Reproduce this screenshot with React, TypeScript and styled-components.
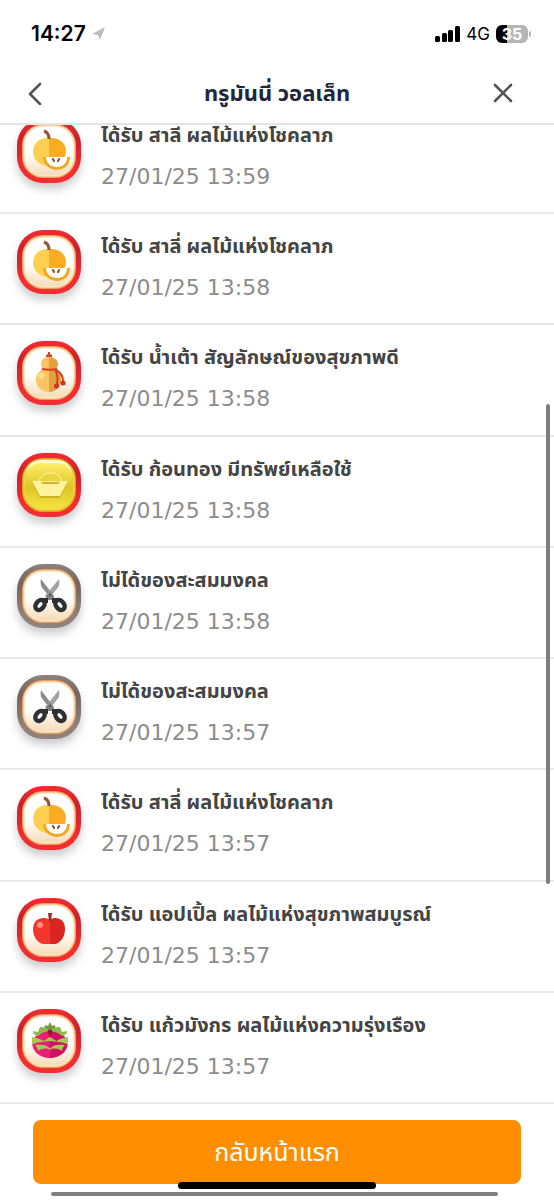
import React from "react";
import styled, { createGlobalStyle } from "styled-components";

const GlobalStyle = createGlobalStyle`
  * { box-sizing: border-box; }
  body { margin: 0; background: #fff; font-family: "Noto Sans Thai", "Noto Sans", "Open Sans", sans-serif; }
  h1, h2, p, ul { margin: 0; padding: 0; }
  button { border: 0; padding: 0; cursor: pointer; font-family: inherit; }
`;

const Page = styled.div`
  position: relative;
  display: flex;
  flex-direction: column;
  min-height: 100vh;
  overflow: hidden;
`;

const Top = styled.header`
  position: relative;
  z-index: 1;
  background: #fff;
  border-bottom: 2px solid #e4e4e4;
`;

const StatusBar = styled.div`
  display: flex;
  justify-content: space-between;
  align-items: center;
  height: 62px;
  padding: 5px 23px 0 31px;
  font-family: Inter, sans-serif;
  color: #000;
`;

const StatusGroup = styled.div`
  display: flex;
  align-items: center;
  gap: 6px;
`;

const Time = styled.time`
  font-size: 21px;
  font-weight: 600;
`;

const Network = styled.span`
  font-size: 17px;
`;

const Battery = styled.span`
  display: flex;
  align-items: center;
  gap: 1px;
`;

const BatteryBody = styled.span`
  width: 32px;
  border-radius: 6px;
  background: linear-gradient(90deg, #000 35%, #b5b5b5 35%);
  color: #fff;
  font-size: 16px;
  font-weight: 700;
  line-height: 18px;
  text-align: center;
`;

const BatteryTip = styled.span`
  width: 2px;
  height: 6px;
  border-radius: 0 2px 2px 0;
  background: #b5b5b5;
`;

const NavBar = styled.nav`
  display: grid;
  grid-template-columns: 1fr auto 1fr;
  align-items: center;
  height: 61px;
  padding: 0 24px;
`;

const NavButton = styled.button<{ $end?: boolean }>`
  display: flex;
  justify-self: ${(p) => (p.$end ? "end" : "start")};
  margin-right: ${(p) => (p.$end ? "15px" : "0")};
  background: none;
`;

const NavTitle = styled.h1`
  color: #22263a;
  font-size: 22px;
  font-weight: 700;
  line-height: 28px;
  padding-top: 4px;
`;

const History = styled.ul`
  flex: 1;
  display: grid;
  grid-auto-rows: 1fr;
  margin-top: -22px;
  list-style: none;
`;

const Row = styled.li`
  display: flex;
  gap: 20px;
  min-height: 111px;
  padding: 16px 18px 0 17px;
  border-bottom: 2px solid #e9e9e9;
`;

const BadgeArt = styled.svg`
  flex: none;
  overflow: visible;
  filter: drop-shadow(0 6px 4px rgba(60, 60, 70, 0.26));
`;

const RowText = styled.div`
  display: flex;
  flex-direction: column;
  gap: 10px;
  padding-top: 2px;
`;

const RowTitle = styled.h2`
  color: #444;
  font-size: 20px;
  font-weight: 700;
  line-height: 30px;
  white-space: nowrap;
`;

const RowDate = styled.time`
  color: #8c8c8c;
  font-family: "DejaVu Sans", sans-serif;
  font-size: 22px;
  line-height: 32px;
`;

const Footer = styled.footer`
  display: flex;
  flex-direction: column;
  padding: 16px 33px;
`;

const HomeButton = styled.button`
  height: 64px;
  padding-top: 2px;
  border-radius: 8px;
  background: #ff8f00;
  color: #fff;
  font-size: 25px;
`;

const ScrollThumb = styled.div`
  position: absolute;
  z-index: 2;
  top: 404px;
  right: 4px;
  width: 4px;
  height: 480px;
  border-radius: 2px;
  background: #7d7d7d;
`;

const HorizontalThumb = styled.div`
  position: absolute;
  right: 56px;
  bottom: 4px;
  left: 51px;
  height: 4px;
  border-radius: 2px;
  background: #808080;
`;

const HomeIndicator = styled.div`
  position: absolute;
  bottom: 11px;
  left: 50%;
  width: 198px;
  height: 7px;
  margin-left: -99px;
  border-radius: 4px;
  background: #000;
`;

type Kind = "pear" | "gourd" | "gold" | "scissors" | "apple" | "dragon";

const Pear = () => (
  <g>
    <path d="M32 19C22 18 16 25 16 33s7 14 16 14z" fill="#ffd04f" />
    <path d="M32 19c10-1 17 5 17 13s-7 15-17 15z" fill="#fbac22" />
    <path d="M27 12c3 1 5 4 5 8" stroke="#96543a" strokeWidth="3" fill="none" />
    <path d="M26 38h27c0 8-6 13-13 13s-14-5-14-13z" fill="#efa923" />
    <path d="M29 38h21c0 6-4 10-10 10s-11-4-11-10z" fill="#fff" />
    <path d="M36 40l1 2M42 40l-1 2" stroke="#8b4b2b" strokeWidth="2" strokeLinecap="round" />
  </g>
);

const Gourd = () => (
  <g>
    <path d="M32 16c-5 0-8 3-8 7 0 2 1 4 2 5-4 2-7 6-7 11 0 7 6 12 13 12z" fill="#fcc461" />
    <path d="M32 16c5 0 9 3 9 7 0 3-1 4-3 5 4 2 6 6 6 11 0 7-5 12-12 12z" fill="#dfa23e" />
    <path d="M29 16v-2l2-1v-2h2v2l2 1v2z" fill="#cf4a24" />
    <circle cx="24" cy="35" r="3" fill="#ffe08c" />
    <path d="M25 28c5 1 10 1 15 0M38 29c3 4 3 9 2 15M39 29c4 2 7 6 7 11" stroke="#dc3d1e" strokeWidth="2" fill="none" />
    <circle cx="39.5" cy="45" r="2.5" fill="#d62d1c" />
    <circle cx="46" cy="42" r="2.5" fill="#d62d1c" />
  </g>
);

const Gold = () => (
  <g>
    <path d="M22 29c1-12 22-12 23 0z" fill="#ecd63e" stroke="#fff7bb" strokeWidth="1" />
    <path d="M15 29h36l-8 16H23z" fill="#8f7a00" opacity="0.35" />
    <path d="M15 28h8l3 3h15l3-3h7l-8 15H23z" fill="#fff39b" />
  </g>
);

const Scissors = () => (
  <g>
    <path d="M24 15c-1 5 0 8 3 11l8 10 2-4z" fill="#8c8c8e" />
    <path d="M42 15c1 5 0 8-3 11l-8 10-3-4z" fill="#a3a3a5" />
    <path d="M33 27l4 6-2 3h-4l-2-3z" fill="#808083" />
    <ellipse cx="23" cy="41" rx="4" ry="5.5" transform="rotate(38 23 41)" fill="#fff" stroke="#2f3034" strokeWidth="4.5" />
    <ellipse cx="43" cy="41" rx="4" ry="5.5" transform="rotate(-38 43 41)" fill="#fff" stroke="#2f3034" strokeWidth="4.5" />
    <path d="M24 34h7v5h-3zM42 34h-7v5h3z" fill="#2f3034" />
    <circle cx="33" cy="31" r="1" fill="#4d4d50" />
  </g>
);

const Apple = () => (
  <g>
    <path d="M33 22c-6-4-17-2-17 9 0 8 5 15 11 15h6z" fill="#f2362b" />
    <path d="M33 22c5-4 15-2 15 9 0 8-5 15-11 15h-4z" fill="#d9241f" />
    <path d="M32 23l-1-8h4l-1 8z" fill="#9b2a26" />
    <circle cx="23" cy="27" r="3" fill="#ff8e80" />
  </g>
);

const Dragon = () => (
  <g>
    <path d="M33 19c-6 0-11 3-13 7l-5 5c-1 11 8 18 18 18z" fill="#ee1c76" />
    <path d="M33 19c6 0 11 3 13 7l5 5c1 11-8 18-18 18z" fill="#d10f63" />
    <path d="M27 21l1-5 3 1 2-4 2 4 3-1 1 5-4 1h-4z" fill="#6f9c3b" />
    <path d="M23 18c5 0 9 2 10 5-4-1-8 0-12 4-3-1-5-2-5-5l5 1zM43 18c-5 0-9 2-10 5 4-1 8 0 12 4 3-1 5-2 5-5l-5 1z" fill="#8fba48" />
    <path d="M15 28c7 1 10 3 13 5-5 0-9 0-13 3zM51 28c-7 1-10 3-13 5 5 0 9 0 13 3zM25 33l8-5 8 5-8-1z" fill="#a5ca50" />
    <path d="M18 36c7-1 13 0 15 4 2-4 8-5 15-4-2 2-3 4-3 6-5-3-9-3-12-1-3-2-7-2-12 1 0-2-1-4-3-6z" fill="#a5ca50" />
    <circle cx="33" cy="23" r="2.5" fill="#a0103f" />
    <path d="M33 23v5" stroke="#a0103f" strokeWidth="2" />
  </g>
);

const art: Record<Kind, () => React.ReactElement> = {
  pear: Pear, gourd: Gourd, gold: Gold, scissors: Scissors, apple: Apple, dragon: Dragon,
};

const Badge = ({ kind, id }: { kind: Kind; id: string }) => {
  const Art = art[kind];
  const rim = kind === "scissors" ? ["#74645f", "#8d827d"] : ["#cb202d", "#f52c30"];
  const face = kind === "gold" ? ["#fff26d", "#dfc526", "#f5e340"] : ["#fff", "#fff", "#f6dcb8"];
  return (
    <BadgeArt width="64" height="64" viewBox="0 0 64 64" aria-hidden="true">
      <defs>
        <linearGradient id={`${id}-rim`} x1="0" y1="0" x2="0" y2="1">
          <stop offset="0" stopColor={rim[1]} />
          <stop offset="0.3" stopColor={rim[0]} />
          <stop offset="0.8" stopColor={rim[1]} />
        </linearGradient>
        <linearGradient id={`${id}-face`} x1="0" y1="0" x2="0" y2="1">
          <stop offset="0" stopColor={face[0]} />
          <stop offset="0.55" stopColor={face[1]} />
          <stop offset="1" stopColor={face[2]} />
        </linearGradient>
      </defs>
      <rect width="64" height="64" rx="26" fill={`url(#${id}-rim)`} />
      <rect x="5" y="5" width="54" height="54" rx="21" fill={kind === "gold" ? "#dfa21b" : "#eda05c"} />
      <rect x="6" y="6" width="52" height="52" rx="20" fill={kind === "gold" ? "#e6c433" : "#f8cf9b"} />
      <rect x="7" y="7" width="50" height="50" rx="19" fill={kind === "gold" ? "#f0d43b" : "#fdebd0"} />
      <rect x="8" y="8" width="48" height="48" rx="18" fill={`url(#${id}-face)`} />
      {kind === "gold" && <path d="M9 20c2-8 7-13 15-13h16c8 0 13 5 15 13-4-7-8-10-15-10H24c-7 0-11 3-15 10z" fill="#fffbd2" />}
      <Art />
    </BadgeArt>
  );
};

const entries: { kind: Kind; title: string; date: string }[] = [
  { kind: "pear", title: "ได้รับ สาลี่ ผลไม้แห่งโชคลาภ", date: "27/01/25 13:59" },
  { kind: "pear", title: "ได้รับ สาลี่ ผลไม้แห่งโชคลาภ", date: "27/01/25 13:58" },
  { kind: "gourd", title: "ได้รับ น้ำเต้า สัญลักษณ์ของสุขภาพดี", date: "27/01/25 13:58" },
  { kind: "gold", title: "ได้รับ ก้อนทอง มีทรัพย์เหลือใช้", date: "27/01/25 13:58" },
  { kind: "scissors", title: "ไม่ได้ของสะสมมงคล", date: "27/01/25 13:58" },
  { kind: "scissors", title: "ไม่ได้ของสะสมมงคล", date: "27/01/25 13:57" },
  { kind: "pear", title: "ได้รับ สาลี่ ผลไม้แห่งโชคลาภ", date: "27/01/25 13:57" },
  { kind: "apple", title: "ได้รับ แอปเปิ้ล ผลไม้แห่งสุขภาพสมบูรณ์", date: "27/01/25 13:57" },
  { kind: "dragon", title: "ได้รับ แก้วมังกร ผลไม้แห่งความรุ่งเรือง", date: "27/01/25 13:57" },
];

export default function App() {
  return (
    <Page lang="th">
      <GlobalStyle />
      <Top>
        <StatusBar>
          <StatusGroup>
            <Time>14:27</Time>
            <svg width="14" height="14" viewBox="0 0 14 14" aria-hidden="true">
              <path d="M0 7L13 0 8 13 6 8z" fill="#bdbdbd" />
            </svg>
          </StatusGroup>
          <StatusGroup>
            <svg width="25" height="16" viewBox="0 0 25 16" aria-hidden="true">
              <rect y="10" width="5" height="6" rx="1.5" />
              <rect x="7" y="7" width="5" height="9" rx="1.5" />
              <rect x="13" y="4" width="5" height="12" rx="1.5" />
              <rect x="20" width="5" height="16" rx="1.5" />
            </svg>
            <Network>4G</Network>
            <Battery>
              <BatteryBody>35</BatteryBody>
              <BatteryTip />
            </Battery>
          </StatusGroup>
        </StatusBar>
        <NavBar>
          <NavButton aria-label="ย้อนกลับ">
            <svg width="24" height="24" viewBox="0 0 24 24" fill="none" stroke="#555" strokeWidth="2.6" strokeLinecap="round" strokeLinejoin="round">
              <path d="M16 3L6 13l10 10" />
            </svg>
          </NavButton>
          <NavTitle>ทรูมันนี่ วอลเล็ท</NavTitle>
          <NavButton $end aria-label="ปิด">
            <svg width="24" height="24" viewBox="0 0 24 24" fill="none" stroke="#555" strokeWidth="2.6" strokeLinecap="round">
              <path d="M4 4l16 16M20 4L4 20" />
            </svg>
          </NavButton>
        </NavBar>
      </Top>
      <History>
        {entries.map((entry, index) => (
          <Row key={index}>
            <Badge kind={entry.kind} id={`badge-${index}`} />
            <RowText>
              <RowTitle>{entry.title}</RowTitle>
              <RowDate>{entry.date}</RowDate>
            </RowText>
          </Row>
        ))}
      </History>
      <Footer>
        <HomeButton>กลับหน้าแรก</HomeButton>
      </Footer>
      <ScrollThumb />
      <HorizontalThumb />
      <HomeIndicator />
    </Page>
  );
}
